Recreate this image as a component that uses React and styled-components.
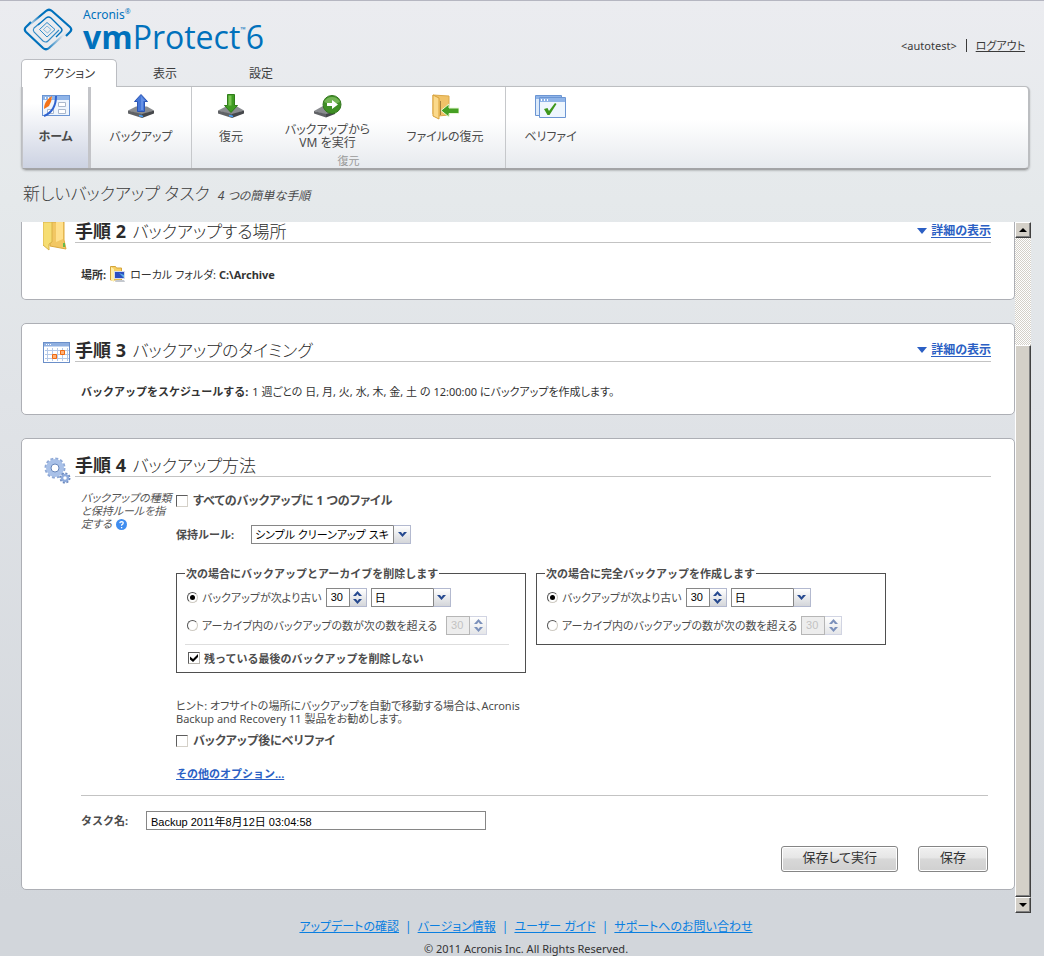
import React, { useState } from "react";
import styled, { createGlobalStyle, css } from "styled-components";

const GlobalStyle = createGlobalStyle`
  * {
    box-sizing: border-box;
  }
  body {
    margin: 0;
    color: #4c4c4c;
    font-family: "Noto Sans", "Noto Sans CJK JP", sans-serif;
    font-size: 11px;
    line-height: 13px;
    font-feature-settings: "palt";
  }
  input, select, button {
    margin: 0;
    font: inherit;
    font-feature-settings: inherit;
  }
`;

const Page = styled.div`
  min-height: 100vh;
  padding: 0 13px 0 21px;
  border-top: 1px solid #b5b6c1;
  background: linear-gradient(#ebecf0, #e5e9eb 200px, #e0e3e7 400px, #d2d6db 900px);
`;

/* header */

const Header = styled.header`
  display: flex;
  justify-content: space-between;
  height: 58px;
  padding: 7px 6px 0 2px;
`;

const Brand = styled.div`
  display: flex;
  gap: 10px;
  color: #0071bc;
`;

const BrandText = styled.div`
  display: flex;
  flex-direction: column;
`;

const Company = styled.div`
  font-size: 12px;
  line-height: 14px;

  sup {
    font-size: 7px;
    line-height: 0;
  }
`;

const Product = styled.div`
  display: flex;
  font-family: "Open Sans", sans-serif;
  font-size: 32px;
  line-height: 30px;

  sup {
    font-size: 7px;
    line-height: 16px;
  }
`;

const Account = styled.div`
  display: flex;
  align-items: center;
  gap: 9px;
  height: 14px;
  margin-top: 30px;
  color: #3a3a3a;

  a {
    color: inherit;
  }
`;

const AccountDivider = styled.span`
  width: 1px;
  height: 13px;
  background: #3a3a3a;
`;

/* ribbon */

const Tabs = styled.nav`
  display: flex;
`;

const Tab = styled.button`
  width: 96px;
  height: 28px;
  padding: 0;
  border: 1px solid transparent;
  border-bottom: 0;
  background: none;
  color: #3c3c3c;
  font-size: 12px;

  ${({ $active }) =>
    $active &&
    css`
      position: relative;
      border-color: #bbbdc2;
      border-radius: 5px 5px 0 0;
      background: #fff;
    `}
`;

const Ribbon = styled.div`
  display: flex;
  height: 84px;
  margin: -1px 1px 0 0;
  border: 1px solid #bcbec1;
  border-right-width: 2px;
  border-bottom: 2px solid #a3a4a6;
  border-radius: 0 5px 5px 5px;
  background: linear-gradient(#fff 40%, #e7eaee);
  box-shadow: 0 1px 2px rgba(0, 0, 0, 0.2);
`;

const RibbonGroup = styled.div`
  display: flex;
  flex-direction: column;
  border-right: ${({ $last }) => ($last ? "0" : "1px solid #c6c8cb")};
`;

const RibbonItems = styled.div`
  display: flex;
`;

const GroupCaption = styled.div`
  color: #999;
  text-align: center;
`;

const RibbonButton = styled.button`
  display: flex;
  flex-direction: column;
  align-items: center;
  width: ${({ $width }) => $width}px;
  height: 67px;
  padding: 5px 0 0;
  border: 0;
  background: none;
  color: #4a4a4a;
  font-size: 12px;

  span {
    display: flex;
    align-items: center;
    height: 32px;
    white-space: pre-line;
  }

  ${({ $active }) =>
    $active &&
    css`
      height: 81px;
      border-right: 3px solid #c3c4c8;
      border-left: 1px solid #c3c4c8;
      background: linear-gradient(#fff 20%, #ccd2e2);
      font-weight: bold;
    `}
`;

const PageTitle = styled.h1`
  display: flex;
  align-items: baseline;
  gap: 8px;
  margin: 0;
  padding: 10px 2px 13px;
  color: #3c3c3c;
  font-size: 17px;
  font-weight: 300;
  line-height: 27px;

  em {
    color: #4a4a4a;
    font-size: 12px;
    font-weight: 400;
  }
`;

/* steps */

const ScrollRegion = styled.div`
  display: flex;
`;

const Steps = styled.main`
  display: flex;
  flex: 1;
  flex-direction: column;
  gap: 23px;
  min-width: 0;
  padding-bottom: 23px;
`;

const Panel = styled.section`
  padding: 0 23px 0 21px;
  border: 1px solid #adafb5;
  border-radius: 5px;
  background: #fff;

  ${({ $cut }) =>
    $cut &&
    css`
      border-top: 0;
      border-radius: 0 0 5px 5px;
    `}
`;

const StepHead = styled.div`
  display: flex;
  align-items: flex-end;
  height: ${({ $cut }) => ($cut ? 21 : 38)}px;
`;

const StepIcon = styled.div`
  display: flex;
  width: 32px;
  height: ${({ $cut }) => ($cut ? 21 : 20)}px;

  svg {
    flex: none;
  }
`;

const StepTitle = styled.h2`
  display: flex;
  flex: 1;
  align-items: center;
  justify-content: space-between;
  height: 23px;
  margin: 0;
  border-bottom: 1px solid #c3c3c3;
  color: #2b2b2b;
  font-size: 17px;
  font-weight: 300;
  line-height: 22px;

  b {
    margin-right: 2px;
    font-size: 18px;
    font-weight: 700;
  }
`;

const DetailsLink = styled.a`
  display: flex;
  align-items: center;
  gap: 4px;
  color: #2b5fc4;
  font-size: 12px;
  font-weight: bold;
  line-height: 13px;
  text-decoration: none;

  span {
    border-bottom: 1px solid #2b5fc4;
  }
`;

const Summary = styled.div`
  display: flex;
  align-items: center;
  gap: 4px;
  height: ${({ $tall }) => ($tall ? 56 : 52)}px;
  padding: 7px 0 0 38px;
  color: #333;

  b {
    font-feature-settings: normal;
  }
`;

const StepBody = styled.div`
  display: grid;
  grid-template-columns: 95px 1fr;
  padding: 14px 0 0 38px;
`;

const StepHint = styled.div`
  color: #555;
  font-style: italic;

  svg {
    margin-left: 4px;
    vertical-align: -2px;
  }
`;

const Form = styled.form`
  display: flex;
  flex-direction: column;
  align-items: flex-start;
`;

const Row = styled.div`
  display: flex;
  align-items: center;
  gap: 5px;
  height: 19px;
  margin-top: ${({ $top }) => $top || 0}px;
`;

const Label = styled.label`
  white-space: nowrap;
`;

const OptionLabel = styled(Label)`
  font-size: 12px;
  font-weight: bold;
`;

const FieldLabel = styled(Label)`
  width: ${({ $width }) => $width}px;
  font-feature-settings: normal;
  font-weight: bold;
`;

const CheckBox = styled.input.attrs({ type: "checkbox" })`
  display: grid;
  place-content: center;
  width: 12px;
  height: 12px;
  appearance: none;
  border: 1px solid #5d5d5d;
  border-right-color: #d4d0c8;
  border-bottom-color: #d4d0c8;
  background: #fff;

  &:checked {
    border-color: #5d5d5d #b8b5ae #b8b5ae #5d5d5d;
  }
  &:checked::before {
    width: 8px;
    height: 8px;
    background: #000;
    clip-path: polygon(0 30%, 38% 62%, 100% 0, 100% 38%, 38% 100%, 0 68%);
    content: "";
  }
`;

const Radio = styled.input.attrs({ type: "radio" })`
  display: grid;
  place-content: center;
  width: 11px;
  height: 11px;
  appearance: none;
  border: 1px solid #555;
  border-right-color: #cfcbc3;
  border-bottom-color: #cfcbc3;
  border-radius: 50%;
  background: #fff;

  &:checked::before {
    width: 5px;
    height: 5px;
    border-radius: 50%;
    background: #000;
    content: "";
  }
`;

const SelectWrap = styled.div`
  display: grid;
  width: ${({ $width }) => $width}px;
  height: 19px;

  > * {
    grid-area: 1 / 1;
  }
`;

const SelectInput = styled.select`
  width: 100%;
  padding: 0 17px 0 3px;
  appearance: none;
  border: 1px solid #868686;
  border-radius: 0;
  background: #fff;
  color: #000;
  font-size: 11px;
`;

const SelectArrow = styled.span`
  display: grid;
  place-content: center;
  justify-self: end;
  width: 18px;
  border: 1px solid #b3b9cf;
  border-left-color: #868686;
  background: linear-gradient(#fff, #d4d6da);
  pointer-events: none;
`;

const SpinnerWrap = styled.div`
  display: flex;
  width: 41px;
  height: 19px;
  opacity: ${({ $disabled }) => ($disabled ? 0.6 : 1)};
`;

const SpinnerInput = styled.input`
  width: 24px;
  padding: 0 0 0 4px;
  border: 1px solid #868686;
  border-radius: 0;
  background: #fff;
  color: #000;
  font-family: "Liberation Sans", sans-serif;

  &:disabled {
    background: #e2e2e2;
    color: #999;
  }
`;

const SpinnerButtons = styled.div`
  display: flex;
  flex: 1;
  flex-direction: column;
  border: 1px solid #b3b9cf;
  border-left: 0;
  background: linear-gradient(#fff, #d4d6da);
`;

const SpinnerButton = styled.button`
  display: grid;
  flex: 1;
  place-content: center;
  padding: 0;
  border: 0;
  background: none;
`;

const Rules = styled.div`
  display: flex;
  align-items: flex-start;
  gap: 10px;
  margin-top: 23px;
`;

const RuleSet = styled.fieldset`
  width: 350px;
  margin: 0;
  padding: 8px 16px 0 8px;
  border: 1px solid #4f4f4f;
`;

const RuleLegend = styled.legend`
  padding: 0 1px;
  font-feature-settings: normal;
  font-weight: bold;
`;

const RuleRow = styled(Row)`
  gap: 4px;
  margin-bottom: 9px;
  padding-left: 2px;
`;

const RuleAmount = styled.div`
  margin-left: ${({ $gap }) => $gap}px;
`;

const RuleLine = styled.hr`
  margin: 8px 0 7px;
  border: 0;
  border-top: 1px solid #dedede;
`;

const RuleCheck = styled(Row)`
  gap: 4px;
  height: 12px;
  margin-bottom: 8px;
  padding-left: 3px;

  label {
    font-feature-settings: normal;
    font-weight: bold;
  }
`;

const Tip = styled.p`
  width: 350px;
  margin: 26px 0 0;
`;

const MoreLink = styled.a`
  margin-top: 17px;
  color: #2b5fc4;
  font-feature-settings: normal;
  font-weight: bold;
`;

const TaskFooter = styled.div`
  margin: 15px 3px 0 38px;
  padding: 15px 0 17px;
  border-top: 1px solid #c3c3c3;
`;

const TaskInput = styled.input`
  width: 340px;
  height: 19px;
  padding: 0 4px;
  border: 1px solid #868686;
  color: #000;
  font-family: "Liberation Sans", "Noto Sans CJK JP", sans-serif;
`;

const Actions = styled.div`
  display: flex;
  justify-content: flex-end;
  gap: 20px;
  margin-top: 16px;
`;

const ActionButton = styled.button`
  height: 26px;
  min-width: 70px;
  padding: 0 20px 3px;
  border: 1px solid #858585;
  border-radius: 3px;
  background: linear-gradient(#f1f1f1, #e6e6e6 45%, #d8d8d8 50%, #d0d0d0);
  box-shadow: inset 0 0 0 1px #fff;
  color: #333;
  font-size: 13px;
`;

/* scroll bar */

const ScrollBar = styled.div`
  display: flex;
  flex-direction: column;
  width: 16px;
`;

const raised = css`
  border: 1px solid #fff;
  border-right: 1px solid #404040;
  border-bottom: 1px solid #404040;
  background: #d4d0c8;
  box-shadow: inset -1px -1px #808080;
`;

const ScrollButton = styled.button`
  display: grid;
  place-content: center;
  height: 16px;
  padding: 0;
  ${raised}
`;

const ScrollTrack = styled.div`
  flex: 107;
  background: repeating-conic-gradient(#d4d0c8 0 25%, #fff 0 50%) 0 0 / 2px 2px;
`;

const ScrollThumb = styled.div`
  flex: 551;
  ${raised}
`;

/* footer */

const Footer = styled.footer`
  padding: 4px 0 0;
  color: #333;
  text-align: center;
`;

const FooterLinks = styled.div`
  display: flex;
  justify-content: center;
  gap: 6px;
  color: #0a7fe0;
  font-size: 12px;
  line-height: 20px;

  a {
    color: inherit;
  }
`;

const Copyright = styled.div`
  padding: 5px 0 2px;
`;

/* drawings */

const Logo = () => (
  <svg width="50" height="43" viewBox="0 0 50 43" fill="none" stroke="#0071bc">
    <defs>
      <linearGradient id="logoTop" x1="0" y1="1" x2="1" y2="0.6">
        <stop offset="0.2" stopColor="#0071bc" stopOpacity="0.15" />
        <stop offset="0.5" stopColor="#0071bc" />
      </linearGradient>
      <linearGradient id="logoBottom" x1="0" y1="0" x2="1" y2="0">
        <stop offset="0.5" stopColor="#0071bc" />
        <stop offset="0.9" stopColor="#0071bc" stopOpacity="0.05" />
      </linearGradient>
    </defs>
    <path d="M5 18 L23 3 Q26 0.500 29 3 L47 19 Q49.500 21.500 47 24 L43 28" stroke="url(#logoTop)" strokeWidth="2.200" />
    <path d="M8 14 L3 19 Q0.500 21.500 3 24 L20 40 Q23 42.500 26 40 L44 24" stroke="url(#logoBottom)" strokeWidth="2.200" />
    <path d="M15 17 L23 10 Q25.500 8 28 10 L38 20 Q40 22 38 24 L33 29" strokeWidth="1.400" />
    <path d="M17 15 L11 20 Q9.500 22 11 24 L20 33 Q23 35 25 33 L36 22" strokeWidth="1.100" opacity="0.8" />
    <path d="M24 14.500 L32 21.500 L24 29 L16.500 21.500 Z" strokeWidth="0.800" strokeLinejoin="round" />
    <path d="M24 18 L28 21.500 L24.500 25 L20.500 21.500 Z" strokeWidth="0.700" opacity="0.6" />
  </svg>
);

const HomeIcon = () => (
  <svg width="28" height="28" viewBox="0 0 28 28">
    <rect x="0.500" y="3.500" width="27" height="20" fill="#eef5fd" stroke="#6b95d3" />
    <rect x="1" y="4" width="26" height="4" fill="#8fb4e8" />
    <path d="M3 6h1M6 6h1M9 6h1" stroke="#fff" strokeWidth="2" />
    <path d="M16.500 10.500h7v4h-7zM16.500 17.500h7v4h-7zM5.500 17.500h6v4h-6z" fill="#fff" stroke="#aab8cc" />
    <path d="M10 4 C4 8 2 12 2 17 L7 14 Q10 9 10 4Z" fill="#f47216" />
    <path d="M14 4 Q14 19 2 24" fill="none" stroke="#2e62cf" strokeWidth="2" />
  </svg>
);

const Disk = () => (
  <>
    <path d="M1 18.500 L9 14.500 H20 L27 18.500 L15 23 Z" fill="#8a8c90" />
    <path d="M1 18.500 L15 22 V26 L1 21.500Z" fill="#606266" />
    <path d="M15 22 L27 18.500 V21.500 L15 26Z" fill="#46484c" />
    <path d="M12 23.500l4 1" stroke="#4aa3ff" strokeWidth="1.500" />
  </>
);

const BackupIcon = () => (
  <svg width="28" height="28" viewBox="0 0 28 28">
    <Disk />
    <path d="M14 2.500 L20.500 9.500 H17.500 V19.500 H10.500 V9.500 H7.500Z" fill="#4677d8" stroke="#2a54b4" />
    <path d="M14 4 L18 9 H16 V18 H14Z" fill="#7ba3ee" opacity="0.6" />
  </svg>
);

const RestoreIcon = () => (
  <svg width="28" height="28" viewBox="0 0 28 28">
    <Disk />
    <path d="M14 20.500 L20.500 13.500 H17.500 V2.500 H10.500 V13.500 H7.500Z" fill="#3f9c22" stroke="#2f7d19" />
    <path d="M11.500 3.500h3v10h-3z" fill="#8bd063" opacity="0.8" />
  </svg>
);

const RunVmIcon = () => (
  <svg width="28" height="28" viewBox="0 0 28 28">
    <path d="M0 19 L9 14 L21 16 L23 19 L13 23Z" fill="#8a8c90" />
    <path d="M0 19 L12 22 V25.500 L0 21.500Z" fill="#606266" />
    <path d="M12 22 L21 19.500 V22 L12 25.500Z" fill="#46484c" />
    <circle cx="18" cy="12.500" r="9" fill="#3f8f25" stroke="#32751d" />
    <path d="M10 10 A9 9 0 0 1 26 10 Q18 14 10 10Z" fill="#9fd47c" opacity="0.55" />
    <path d="M13 11h5V8l6 4.500-6 4.500v-3h-5z" fill="#fff" />
  </svg>
);

const FileRestoreIcon = () => (
  <svg width="28" height="28" viewBox="0 0 28 28">
    <path d="M2 3 L18 4 V23 L7 24 L2 22Z" fill="#f0c268" stroke="#dba94a" />
    <path d="M2 3 L8 6 V27 L2 24Z" fill="#fbd98a" stroke="#d8a13a" />
    <path d="M9.500 9v14" stroke="#a5803c" />
    <path d="M10 18.500 L18 12 V16 H28 V21.500 H18 V25Z" fill="#46a023" stroke="#e6f6d5" />
  </svg>
);

const VerifyIcon = () => (
  <svg width="32" height="28" viewBox="0 0 32 28">
    <path d="M0.500 3.500h26v20h-26z" fill="#dceafa" stroke="#6b95d3" />
    <path d="M1 4h25v3H1z" fill="#8fb4e8" />
    <path d="M4.500 5.500h26v20h-26z" fill="#eef6fe" stroke="#6b95d3" />
    <path d="M5 6h25v4H5z" fill="#8fb4e8" />
    <path d="M6 8h1M9 8h1M12 8h1" stroke="#fff" strokeWidth="2" />
    <path d="M9 17 L12.500 16 L14 19 L20 11 L21.500 12 L14.500 23 H12.500Z" fill="#3d971d" />
  </svg>
);

const FolderIcon = () => (
  <svg width="26" height="29" viewBox="0 0 26 29">
    <path d="M7 0 H21 V18 L23 27 L7 24Z" fill="#f2c763" stroke="#dba93f" />
    <path d="M0 0 H9 V20 L6 22 V28 L0 23Z" fill="#f6dd72" stroke="#d9b247" />
    <path d="M13 0h7v17l-7 3z" fill="#ffe08c" />
    <path d="M21 21v4" stroke="#67b94a" strokeWidth="2" />
  </svg>
);

const SmallFolderIcon = () => (
  <svg width="16" height="17" viewBox="0 0 16 17">
    <path d="M0.500 0.500h5l1 1.500h5v12h-11z" fill="#f6cf63" stroke="#d5a53a" />
    <path d="M1 1l3 2v13l-3-2z" fill="#fff0ab" />
    <rect x="4.500" y="5.500" width="10" height="7" fill="#2c4fc0" stroke="#d5dbe8" />
    <path d="M9 7l5 5v-3z" fill="#5bb0e8" />
    <path d="M6 14h8l1 2H5z" fill="#c4c8ce" />
  </svg>
);

const CalendarIcon = () => (
  <svg width="28" height="22" viewBox="0 0 28 22">
    <rect x="0.500" y="0.500" width="26" height="20" fill="#fff" stroke="#6b8fc9" />
    <path d="M1 1h25v3.500H1z" fill="#8fafe0" />
    <path d="M3 2.500h1M5 2.500h1M7 2.500h1" stroke="#fff" />
    <path d="M4.500 6v13M9.500 6v13M14.500 6v13M19.500 6v13M24.500 6v13M2 8.500h24M2 12.500h24M2 16.500h24" stroke="#b5c9e8" />
    <path d="M17.500 8.500h4v4h-4zM9.500 12.500h4v4h-4z" fill="#ffb27a" stroke="#f06a10" />
  </svg>
);

const GearsIcon = () => (
  <svg width="28" height="27" viewBox="0 0 28 27" fill="none">
    <circle cx="12" cy="11" r="9" stroke="#8fa9d6" strokeWidth="3" strokeDasharray="2.800 1.912" />
    <circle cx="12" cy="11" r="6.500" stroke="#a9c1e8" strokeWidth="5" />
    <circle cx="12" cy="11" r="4" fill="#fff" stroke="#6686bb" />
    <circle cx="22" cy="21" r="4.500" stroke="#6b88bd" strokeWidth="2" strokeDasharray="2 1.500" />
    <circle cx="22" cy="21" r="3" fill="#fff" stroke="#8fabdb" strokeWidth="2.500" />
  </svg>
);

const HelpIcon = () => (
  <svg width="11" height="11" viewBox="0 0 11 11">
    <circle cx="5.500" cy="5.500" r="5.500" fill="#3f8df0" />
    <path d="M3.800 4.200 Q4 2.600 5.600 2.600 Q7.300 2.700 7.200 4.200 Q7 5.100 5.600 6 V6.800 M5.600 8v1.200" fill="none" stroke="#fff" strokeWidth="1.300" />
  </svg>
);

const Triangle = ({ up, color = "#2b5fc4", width = 10 }) => (
  <svg width={width} height={width === 10 ? 6 : 4} viewBox="0 0 10 5" preserveAspectRatio="none">
    <path d={up ? "M0 5h10L5 0z" : "M0 0h10L5 5z"} fill={color} />
  </svg>
);

const Chevron = ({ up }) => (
  <svg width="9" height="5" viewBox="0 0 9 5">
    <path d={up ? "M0 5 4.500 0 9 5H6L4.500 3 3 5z" : "M0 0 4.500 5 9 0H6L4.500 2 3 0z"} fill="#26498f" />
  </svg>
);

/* parts */

const Select = ({ width, options, ...rest }) => (
  <SelectWrap $width={width}>
    <SelectInput {...rest}>
      {options.map((option) => (
        <option key={option}>{option}</option>
      ))}
    </SelectInput>
    <SelectArrow>
      <Chevron />
    </SelectArrow>
  </SelectWrap>
);

const Spinner = ({ label, disabled }) => {
  const [value, setValue] = useState(30);

  return (
    <SpinnerWrap $disabled={disabled}>
      <SpinnerInput
        aria-label={label}
        value={value}
        disabled={disabled}
        onChange={(e) => setValue(Number(e.target.value) || 0)}
      />
      <SpinnerButtons>
        <SpinnerButton type="button" aria-label="増やす" disabled={disabled} onClick={() => setValue(value + 1)}>
          <Chevron up />
        </SpinnerButton>
        <SpinnerButton type="button" aria-label="減らす" disabled={disabled} onClick={() => setValue(value - 1)}>
          <Chevron />
        </SpinnerButton>
      </SpinnerButtons>
    </SpinnerWrap>
  );
};

const Step = ({ number, title, icon, details, cut, children }) => (
  <Panel $cut={cut}>
    <StepHead $cut={cut}>
      <StepIcon $cut={cut}>{icon}</StepIcon>
      <StepTitle>
        <span>
          <b>手順 {number}</b> {title}
        </span>
        {details && (
          <DetailsLink href="#details">
            <Triangle />
            <span>詳細の表示</span>
          </DetailsLink>
        )}
      </StepTitle>
    </StepHead>
    {children}
  </Panel>
);

const RuleFields = ({ name, legend, gap, children }) => (
  <RuleSet>
    <RuleLegend>{legend}</RuleLegend>
    <RuleRow>
      <Radio name={name} id={`${name}-age`} defaultChecked />
      <Label htmlFor={`${name}-age`}>バックアップが次より古い</Label>
      <Spinner label="期間" />
      <Select width={80} options={["日", "週", "月"]} aria-label="単位" />
    </RuleRow>
    <RuleRow>
      <Radio name={name} id={`${name}-count`} />
      <Label htmlFor={`${name}-count`}>アーカイブ内のバックアップの数が次の数を超える</Label>
      <RuleAmount $gap={gap}>
        <Spinner label="バックアップの数" disabled />
      </RuleAmount>
    </RuleRow>
    {children}
  </RuleSet>
);

const footerLinks = ["アップデートの確認", "バージョン情報", "ユーザー ガイド", "サポートへのお問い合わせ"];

const App = () => {
  return (
    <>
      <GlobalStyle />
      <Page>
        <Header>
          <Brand>
            <Logo />
            <BrandText>
              <Company>
                Acronis<sup>®</sup>
              </Company>
              <Product>
                <b>vm</b>Protect<sup>™</sup>6
              </Product>
            </BrandText>
          </Brand>
          <Account>
            <span>&lt;autotest&gt;</span>
            <AccountDivider />
            <a href="#logout">ログアウト</a>
          </Account>
        </Header>

        <Tabs>
          <Tab $active>アクション</Tab>
          <Tab>表示</Tab>
          <Tab>設定</Tab>
        </Tabs>
        <Ribbon>
          <RibbonButton $active $width={69}>
            <HomeIcon />
            <span>ホーム</span>
          </RibbonButton>
          <RibbonGroup>
            <RibbonButton $width={100}>
              <BackupIcon />
              <span>バックアップ</span>
            </RibbonButton>
          </RibbonGroup>
          <RibbonGroup>
            <RibbonItems>
              <RibbonButton $width={78}>
                <RestoreIcon />
                <span>復元</span>
              </RibbonButton>
              <RibbonButton $width={115}>
                <RunVmIcon />
                <span>{"バックアップから\nVM を実行"}</span>
              </RibbonButton>
              <RibbonButton $width={120}>
                <FileRestoreIcon />
                <span>ファイルの復元</span>
              </RibbonButton>
            </RibbonItems>
            <GroupCaption>復元</GroupCaption>
          </RibbonGroup>
          <RibbonGroup $last>
            <RibbonButton $width={89}>
              <VerifyIcon />
              <span>ベリファイ</span>
            </RibbonButton>
          </RibbonGroup>
        </Ribbon>

        <PageTitle>
          新しいバックアップ タスク <em>4 つの簡単な手順</em>
        </PageTitle>

        <ScrollRegion>
          <Steps>
            <Step number={2} title="バックアップする場所" icon={<FolderIcon />} details cut>
              <Summary $tall>
                <b>場所:</b>
                <SmallFolderIcon />
                <span>
                  ローカル フォルダ: <b>C:\Archive</b>
                </span>
              </Summary>
            </Step>

            <Step number={3} title="バックアップのタイミング" icon={<CalendarIcon />} details>
              <Summary>
                <b>バックアップをスケジュールする:</b>
                <span>1 週ごとの 日, 月, 火, 水, 木, 金, 土 の 12:00:00 にバックアップを作成します。</span>
              </Summary>
            </Step>

            <Step number={4} title="バックアップ方法" icon={<GearsIcon />}>
              <StepBody>
                <StepHint>
                  バックアップの種類
                  <br />
                  と保持ルールを指
                  <br />
                  定する
                  <HelpIcon />
                </StepHint>
                <Form>
                  <Row>
                    <CheckBox id="single-file" />
                    <OptionLabel htmlFor="single-file">すべてのバックアップに 1 つのファイル</OptionLabel>
                  </Row>
                  <Row $top={15}>
                    <FieldLabel $width={70} htmlFor="retention">
                      保持ルール:
                    </FieldLabel>
                    <Select id="retention" width={160} options={["シンプル クリーンアップ スキ"]} />
                  </Row>
                  <Rules>
                    <RuleFields name="delete" legend="次の場合にバックアップとアーカイブを削除します" gap={5}>
                      <RuleLine />
                      <RuleCheck>
                        <CheckBox id="keep-last" defaultChecked />
                        <Label htmlFor="keep-last">残っている最後のバックアップを削除しない</Label>
                      </RuleCheck>
                    </RuleFields>
                    <RuleFields name="full" legend="次の場合に完全バックアップを作成します" gap={0} />
                  </Rules>
                  <Tip>
                    ヒント: オフサイトの場所にバックアップを自動で移動する場合は、Acronis Backup and Recovery 11
                    製品をお勧めします。
                  </Tip>
                  <Row $top={6}>
                    <CheckBox id="verify-after" />
                    <OptionLabel htmlFor="verify-after">バックアップ後にベリファイ</OptionLabel>
                  </Row>
                  <MoreLink href="#options">その他のオプション...</MoreLink>
                </Form>
              </StepBody>
              <TaskFooter>
                <Row>
                  <FieldLabel $width={60} htmlFor="task-name">
                    タスク名:
                  </FieldLabel>
                  <TaskInput id="task-name" defaultValue="Backup 2011年8月12日 03:04:58" />
                </Row>
                <Actions>
                  <ActionButton>保存して実行</ActionButton>
                  <ActionButton>保存</ActionButton>
                </Actions>
              </TaskFooter>
            </Step>
          </Steps>

          <ScrollBar>
            <ScrollButton aria-label="上へスクロール">
              <Triangle up color="#000" width={8} />
            </ScrollButton>
            <ScrollTrack />
            <ScrollThumb />
            <ScrollButton aria-label="下へスクロール">
              <Triangle color="#000" width={8} />
            </ScrollButton>
          </ScrollBar>
        </ScrollRegion>

        <Footer>
          <FooterLinks>
            {footerLinks.map((link, index) => (
              <React.Fragment key={link}>
                {index > 0 && <span>|</span>}
                <a href="#footer">{link}</a>
              </React.Fragment>
            ))}
          </FooterLinks>
          <Copyright>© 2011 Acronis Inc. All Rights Reserved.</Copyright>
        </Footer>
      </Page>
    </>
  );
};

export default App;
